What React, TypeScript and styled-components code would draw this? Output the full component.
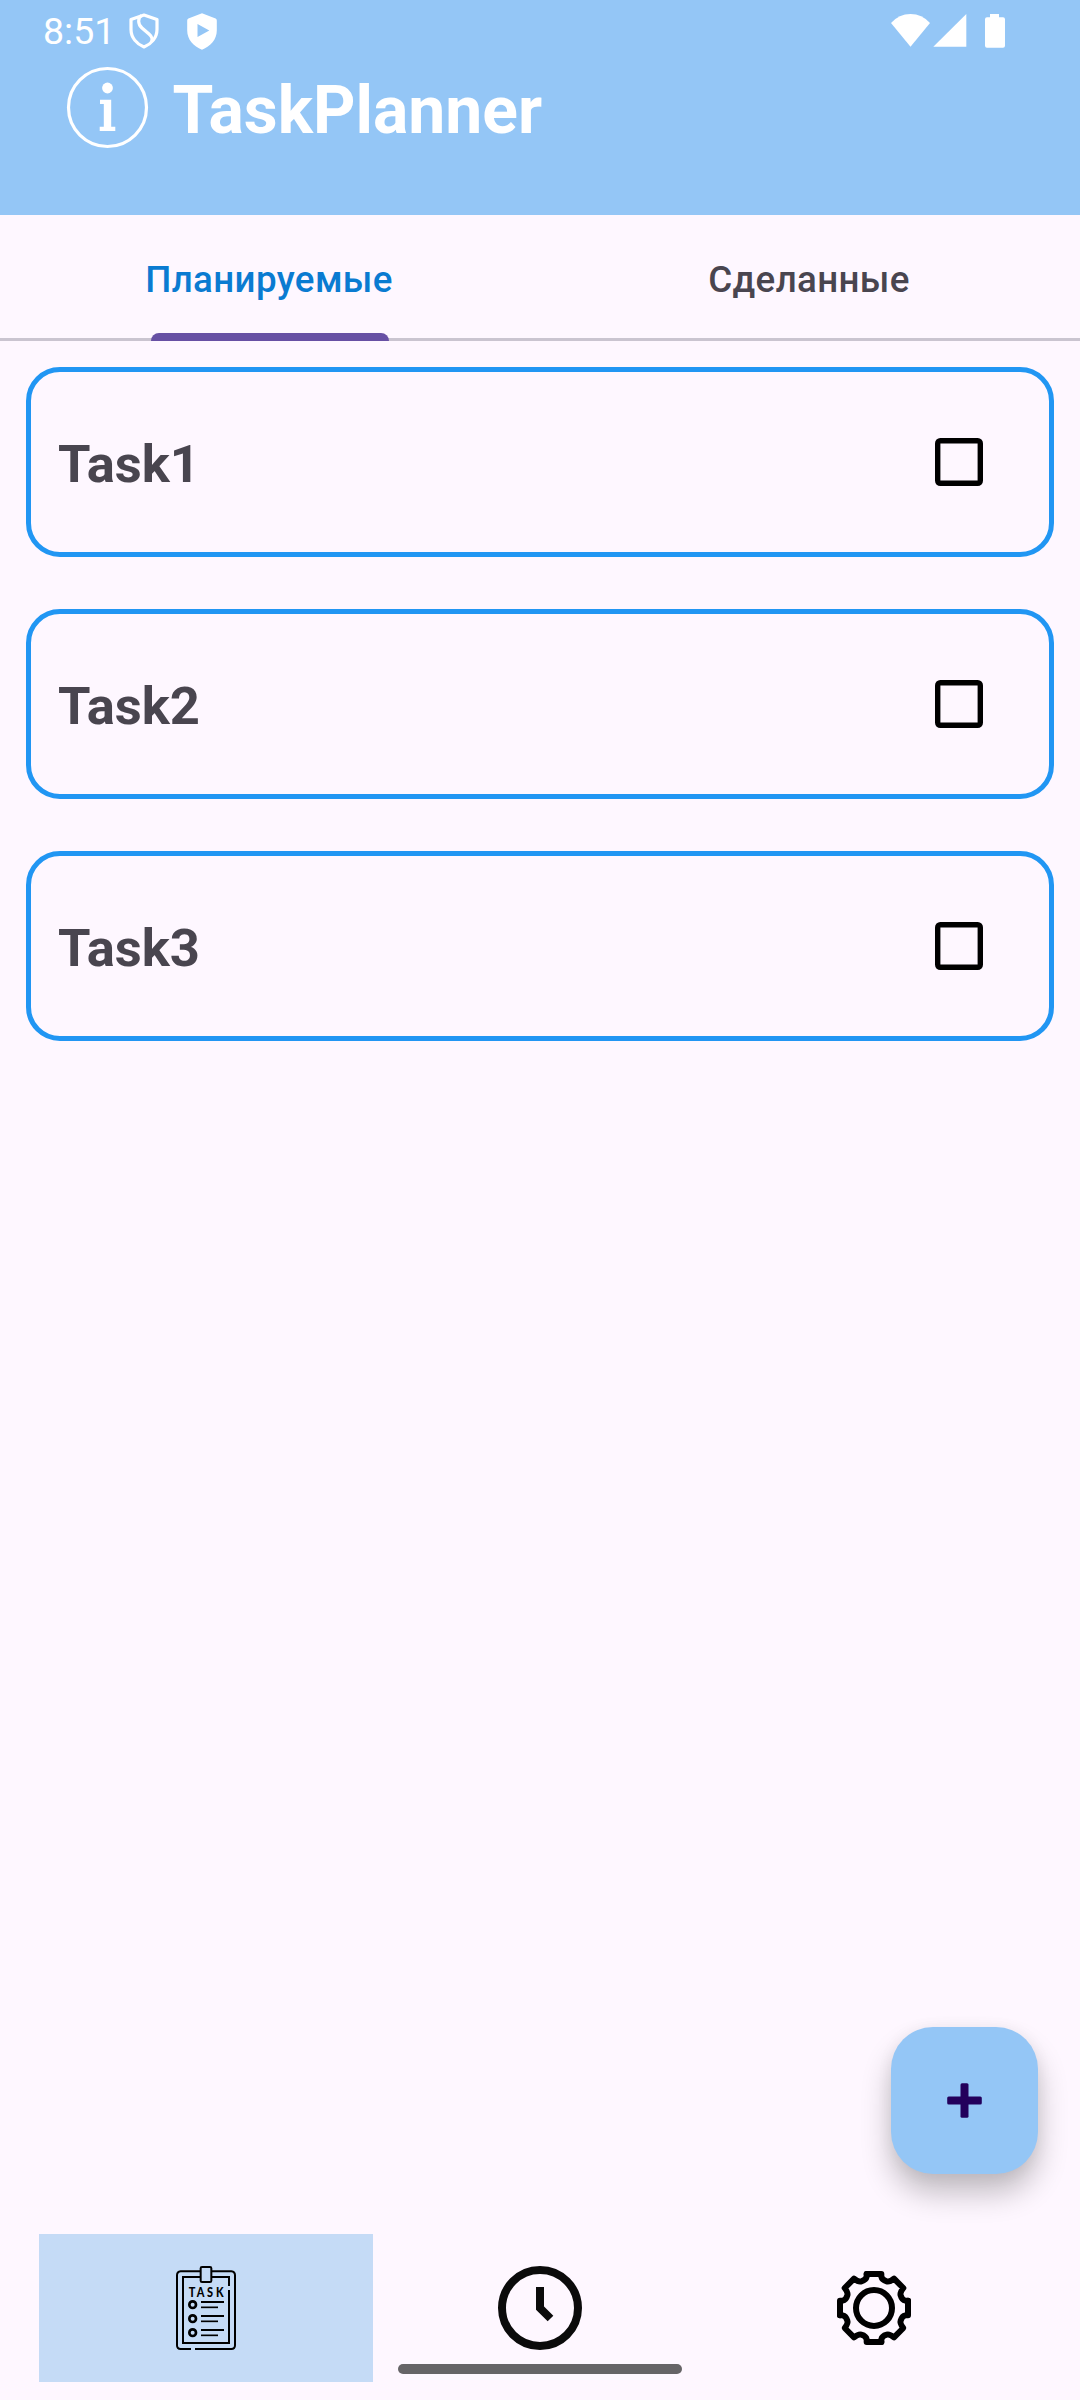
import React, { useState } from "react";
import styled, { createGlobalStyle } from "styled-components";

const sky = "#94c6f6";
const surface = "#fef7ff";
const ink = "#49454f";

const GlobalStyle = createGlobalStyle`
  * { box-sizing: border-box; }
  body { margin: 0; background: ${surface}; }
  button { border: 0; padding: 0; margin: 0; background: none; font: inherit; cursor: pointer; }
`;

const Screen = styled.div`
  position: relative;
  display: flex;
  flex-direction: column;
  width: 1080px;
  height: 2400px;
  overflow: hidden;
  background: ${surface};
  font-family: Roboto, "Noto Sans", sans-serif;
`;

const Header = styled.header`
  display: flex;
  flex-direction: column;
  height: 215px;
  background: ${sky};
  color: #fff;
`;

const StatusBar = styled.div`
  display: flex;
  align-items: center;
  justify-content: space-between;
  height: 62px;
  padding: 0 75px 0 43px;
`;

const StatusGroup = styled.div<{ $gap: number }>`
  display: flex;
  align-items: center;
  gap: ${(p) => p.$gap}px;
`;

const Clock = styled.span`
  width: 86px;
  font-size: 37.5px;
  line-height: 62px;
`;

const Brand = styled.div`
  display: flex;
  align-items: center;
  gap: 23.5px;
  height: 90px;
  padding-left: 66px;
`;

const Title = styled.h1`
  margin: 0;
  padding-top: 7px;
  font-size: 66px;
  line-height: 78px;
  font-weight: 700;
`;

const TabRow = styled.nav`
  display: flex;
  height: 126px;
  border-bottom: 3px solid #cac4d0;
`;

const Tab = styled.button<{ $active: boolean }>`
  position: relative;
  flex: 1;
  height: 126px;
  padding: 2px 2px 0 0;
  color: ${(p) => (p.$active ? "#0a7bd1" : ink)};
  font-size: 36.75px;
  font-weight: 500;
  letter-spacing: 0.36px;
`;

const TabIndicator = styled.span`
  position: absolute;
  left: 151px;
  bottom: 0;
  width: 238px;
  height: 8px;
  border-radius: 8px 8px 0 0;
  background: #6750a4;
`;

const TaskList = styled.main`
  display: flex;
  flex: 1;
  flex-direction: column;
  gap: 52px;
  padding: 26px;
`;

const TaskCard = styled.div`
  display: flex;
  align-items: center;
  justify-content: space-between;
  height: 190px;
  padding: 0 66px 0 27px;
  border: 5px solid #2196f3;
  border-radius: 34px;
`;

const TaskName = styled.span`
  padding-top: 3px;
  color: ${ink};
  font-size: 52.5px;
  line-height: 62px;
  font-weight: 700;
`;

const CheckBox = styled.button<{ $checked: boolean }>`
  width: 48px;
  height: 48px;
  border-radius: 5.25px;
  background: ${(p) => (p.$checked ? "#000" : "transparent")};
  box-shadow: inset 0 0 0 5.4px #000;
`;

const AddButton = styled.button`
  position: absolute;
  right: 42px;
  bottom: 226px;
  display: grid;
  place-items: center;
  width: 147px;
  height: 147px;
  border-radius: 42px;
  background: ${sky};
  box-shadow: 0 19px 30px rgba(0, 0, 0, 0.24), 0 2px 16px rgba(0, 0, 0, 0.06);
`;

const BottomNav = styled.nav`
  display: flex;
  height: 166px;
  padding: 0 39px 18px;
`;

const NavItem = styled.button<{ $active: boolean }>`
  display: grid;
  flex: 1;
  place-items: center;
  background: ${(p) => (p.$active ? "#c5dbf6" : "transparent")};
`;

const GestureBar = styled.div`
  position: absolute;
  left: 398px;
  bottom: 26px;
  width: 284px;
  height: 10px;
  border-radius: 5px;
  background: #666467;
`;

const IconLabel = styled.text`
  font-family: Lato, sans-serif;
  font-size: 40px;
  font-weight: 900;
`;

const Svg = styled.svg`
  display: block;
`;

function SplitShieldIcon() {
  return (
    <Svg width="30" height="36" viewBox="0 0 30 36" fill="none" stroke="#fff" strokeWidth="3.2" strokeLinejoin="round">
      <path d="M15 2 28 6.5V16.500C28 24.500 22.500 31 15 34C7.500 31 2 24.500 2 16.500V6.500Z" />
      <path d="M12.500 2.500C8.800 5 8.500 11 13 15L20 21C23.500 24 23.500 26 22.500 29" />
    </Svg>
  );
}

function PlayShieldIcon() {
  return (
    <Svg width="30" height="37" viewBox="0 0 30 37">
      <path
        fill="#fff"
        fillRule="evenodd"
        d="M15 0.300 28.600 5.500Q29.800 6 29.800 7.500V17.500C29.800 26.500 23.500 33.500 15 36.700C6.500 33.500 0.200 26.500 0.200 17.500V7.500Q0.200 6 1.400 5.500ZM10.500 11V24L22.300 17.500Z"
      />
    </Svg>
  );
}

function SignalIcons() {
  return (
    <Svg width="114" height="36" viewBox="0 0 114 36" fill="#fff">
      <path d="M0 10Q8 1 19.500 1T39 10L19.500 33.700Z" />
      <path d="M42.300 33.700 75.300 1V33.700Z" />
      <path d="M99 1H108V4.300H112Q114 4.300 114 6.300V32.700Q114 34.700 112 34.700H96Q94 34.700 94 32.700V6.300Q94 4.300 96 4.300H99Z" />
    </Svg>
  );
}

function InfoIcon() {
  return (
    <Svg width="83" height="83" viewBox="0 0 83 83" fill="#fff">
      <circle cx="41.500" cy="41.500" r="39" fill="none" stroke="#fff" strokeWidth="3.2" />
      <circle cx="41.500" cy="22" r="5.400" />
      <path d="M34 33.700H45.200V60.700H49.300V65H33.700V60.700H37.800V38H34Z" />
    </Svg>
  );
}

function PlusIcon() {
  return (
    <Svg width="37" height="37" viewBox="0 0 37 37" fill="#23005c">
      <rect x="14.500" y="1.200" width="8" height="34.600" rx="1.500" />
      <rect x="1.200" y="14.500" width="34.600" height="8" rx="1.500" />
    </Svg>
  );
}

function ClipboardIcon() {
  return (
    <Svg width="60" height="84" viewBox="48 48 180 252" fill="none" stroke="#000" strokeWidth="6">
      <path d="M120 64H62Q51 65 51 76V286Q51 297 62 297H93M105 297H214Q225 297 225 286V76Q225 65 214 64H156" />
      <path d="M120 81H69V279H207V120M207 108V81H156" />
      <rect x="122" y="51" width="32" height="45" rx="4" />
      {[164, 206, 248].map((y) => (
        <g key={y}>
          <circle cx="98" cy={y} r="10" strokeWidth="8" />
          <path d={`M123 ${y - 8}H192`} />
          <path d={`M123 ${y + 8}H174`} strokeWidth="5" />
        </g>
      ))}
      <IconLabel x="0 30 67.500 100" y="0" transform="translate(86 141) scale(0.82 1)" fill="#000" stroke="none">
        TASK
      </IconLabel>
    </Svg>
  );
}

function ClockIcon() {
  return (
    <Svg width="84" height="84" viewBox="0 0 84 84" fill="none" stroke="#0b0b0b" strokeWidth="8">
      <circle cx="42" cy="42" r="38" />
      <path d="M42 21V42L52.500 52.500" />
    </Svg>
  );
}

function GearIcon() {
  const quarter =
    "M-22 -102H22V-94Q24 -84 38 -80Q46 -77 60 -88L88 -60Q77 -46 80 -38Q84 -24 94 -22H102";
  return (
    <Svg width="76" height="76" viewBox="-114 -114 228 228" fill="none" stroke="#000" strokeWidth="18" strokeLinejoin="round" strokeLinecap="round">
      {[0, 90, 180, 270].map((angle) => (
        <path key={angle} d={quarter} transform={`rotate(${angle})`} />
      ))}
      <circle r="54" />
    </Svg>
  );
}

const tabs = ["Планируемые", "Сделанные"];
const tasks = ["Task1", "Task2", "Task3"];
const sections = [
  { id: "tasks", Icon: ClipboardIcon },
  { id: "time", Icon: ClockIcon },
  { id: "settings", Icon: GearIcon },
];

export default function App() {
  const [tab, setTab] = useState(0);
  const [section, setSection] = useState(0);
  const [done, setDone] = useState<string[]>([]);

  const toggle = (name: string) =>
    setDone((list) => (list.includes(name) ? list.filter((n) => n !== name) : [...list, name]));

  return (
    <Screen>
      <GlobalStyle />
      <Header>
        <StatusBar>
          <StatusGroup $gap={0}>
            <Clock>8:51</Clock>
            <StatusGroup $gap={28}>
              <SplitShieldIcon />
              <PlayShieldIcon />
            </StatusGroup>
          </StatusGroup>
          <SignalIcons />
        </StatusBar>
        <Brand>
          <InfoIcon />
          <Title>TaskPlanner</Title>
        </Brand>
      </Header>
      <TabRow>
        {tabs.map((name, i) => (
          <Tab key={name} $active={tab === i} onClick={() => setTab(i)}>
            {name}
            {tab === i && <TabIndicator />}
          </Tab>
        ))}
      </TabRow>
      <TaskList>
        {tasks.map((name) => (
          <TaskCard key={name}>
            <TaskName>{name}</TaskName>
            <CheckBox $checked={done.includes(name)} onClick={() => toggle(name)} />
          </TaskCard>
        ))}
      </TaskList>
      <BottomNav>
        {sections.map(({ id, Icon }, i) => (
          <NavItem key={id} $active={section === i} onClick={() => setSection(i)}>
            <Icon />
          </NavItem>
        ))}
      </BottomNav>
      <AddButton>
        <PlusIcon />
      </AddButton>
      <GestureBar />
    </Screen>
  );
}
